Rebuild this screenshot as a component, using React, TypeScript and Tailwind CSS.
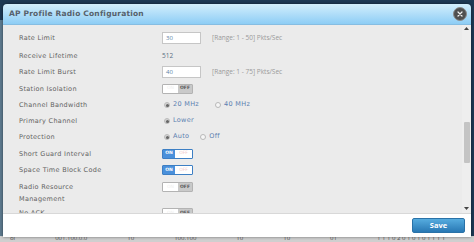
import React from "react";

const font = { fontFamily: '"DejaVu Sans", Verdana, sans-serif' };
const openSans = { fontFamily: '"Open Sans", "Liberation Sans", sans-serif' };

function Toggle({ on }: { on: boolean }) {
  return on ? (
    <div className="flex h-[10px] w-[31px] rounded-[1px] border border-[#3d7fc4] overflow-hidden">
      <div className="w-[12px] bg-[#4a90db] text-white text-[4.5px] font-bold flex items-center justify-center" style={font}>ON</div>
      <div className="flex-1 bg-white text-[#f1c9c9] text-[4.5px] flex items-center justify-center" style={font}>OFF</div>
    </div>
  ) : (
    <div className="flex h-[10px] w-[31px] rounded-[1px] border border-[#b3b3b3] overflow-hidden">
      <div className="w-[15px] bg-white text-[#eee] text-[4.5px] flex items-center justify-center" style={font}>ON</div>
      <div className="flex-1 bg-[#c9c9c9] text-[#555] text-[4.5px] font-bold flex items-center justify-center" style={font}>OFF</div>
    </div>
  );
}

function Radio({ checked, label }: { checked: boolean; label: string }) {
  return (
    <div className="flex items-center">
      <div className={`w-[6px] h-[6px] rounded-full flex items-center justify-center ${checked ? "bg-[#d2d2d2] border border-[#bbb]" : "bg-[#f6f6f6] border border-[#b8b8b8]"}`}>
        {checked && <div className="w-[3px] h-[3px] rounded-full bg-[#666]" />}
      </div>
      <span className="ml-[3px] text-[6.5px] tracking-[0.3px] text-[#5b7fb0]" style={font}>{label}</span>
    </div>
  );
}

function Row({ h, label, children, top }: { h: number; label: React.ReactNode; children?: React.ReactNode; top?: boolean }) {
  return (
    <div className={`flex ${top ? "items-start pt-[3px]" : "items-center"}`} style={{ height: h }}>
      <div className="w-[143px] shrink-0 text-[6.5px] tracking-[0.3px] text-[#626262] leading-[12px]" style={font}>{label}</div>
      <div className="flex items-center">{children}</div>
    </div>
  );
}

function Input({ value, range }: { value: string; range: string }) {
  return (
    <div className="flex items-center">
      <div className="w-[39px] h-[12px] bg-white border border-[#c6c6c6] flex items-center pl-[3px] text-[6px] text-[#5b7fa6]" style={openSans}>{value}</div>
      <span className="ml-[11px] text-[6.5px] text-[#9a9a9a]" style={openSans}>{range}</span>
    </div>
  );
}

export default function App() {
  return (
    <div className="relative w-[474px] h-[242px] overflow-hidden bg-[#1d3954]">
      <div className="absolute left-0 top-[20px] w-[4px] h-[220px] bg-[#5d7a8e]" />
      <div className="absolute inset-x-0 bottom-0 h-[6px] bg-[#cfcfcf] flex items-start gap-[40px] pl-[10px] text-[6px] text-[#555] leading-[5px]" style={openSans}>
        <span>ol</span><span>001.100.0.0</span><span>10</span><span>100.100</span><span>10</span><span>10</span><span>01</span><span>1 1 1 0 2 0 1 0 1 0 1 1 1 1</span>
      </div>
      <div className="absolute left-[3px] top-[4px] w-[468px] h-[233px] flex flex-col rounded-t-[4px] overflow-hidden shadow-[0_0_3px_rgba(0,0,0,0.5)]">
        <div className="h-[21px] shrink-0 flex items-center justify-between pl-[6px] pr-[4px] bg-gradient-to-b from-[#d2eefc] to-[#8dcdf5] border-b border-[#86bde2]">
          <span className="text-[7.5px] font-bold text-[#56616c] tracking-[0.2px]" style={font}>AP Profile Radio Configuration</span>
          <div className="w-[14px] h-[14px] rounded-full bg-[#4f4f4f] border border-[#8a8a8a] flex items-center justify-center">
            <svg width="6" height="6" viewBox="0 0 6 6"><path d="M1 1L5 5M5 1L1 5" stroke="#f2f2f2" strokeWidth="1.2" strokeLinecap="round" /></svg>
          </div>
        </div>
        <div className="flex-1 flex bg-[#ebebeb] overflow-hidden">
          <div className="flex-1 pl-[16px] pt-[4px] overflow-hidden">
            <Row h={18} label="Rate Limit"><Input value="30" range="[Range: 1 - 50] Pkts/Sec" /></Row>
            <Row h={17} label="Receive Lifetime"><span className="text-[6.5px] text-[#5a6e84]" style={openSans}>512</span></Row>
            <Row h={16} label="Rate Limit Burst"><Input value="40" range="[Range: 1 - 75] Pkts/Sec" /></Row>
            <Row h={17} label="Station Isolation"><Toggle on={false} /></Row>
            <Row h={16} label="Channel Bandwidth"><div className="flex pl-[2px] gap-[16px]"><Radio checked label="20 MHz" /><Radio checked={false} label="40 MHz" /></div></Row>
            <Row h={16} label="Primary Channel"><div className="pl-[2px]"><Radio checked label="Lower" /></div></Row>
            <Row h={16} label="Protection"><div className="flex pl-[2px] gap-[11px]"><Radio checked label="Auto" /><Radio checked={false} label="Off" /></div></Row>
            <Row h={17} label="Short Guard Interval"><Toggle on /></Row>
            <Row h={16} label="Space Time Block Code"><Toggle on /></Row>
            <Row h={27} top label={<>Radio Resource<br />Management</>}><div className="pt-[1px]"><Toggle on={false} /></div></Row>
            <Row h={16} label="No ACK"><Toggle on={false} /></Row>
          </div>
          <div className="w-[9px] shrink-0 bg-[#eeeeee] flex flex-col items-center pt-[2px] pb-[3px]">
            <svg width="5" height="3" viewBox="0 0 5 3"><path d="M2.5 0L5 3H0z" fill="#444" /></svg>
            <div className="h-[92px]" />
            <div className="w-[6px] h-[41px] rounded-[1px] bg-[#c4c4c4]" />
            <div className="flex-1" />
            <svg width="5" height="3" viewBox="0 0 5 3"><path d="M0 0H5L2.5 3z" fill="#444" /></svg>
          </div>
        </div>
        <div className="h-[24px] shrink-0 bg-white border-t border-[#d8d8d8] flex items-start justify-end pt-[4px] pr-[6px]">
          <div className="w-[53px] h-[15px] rounded-[2px] bg-gradient-to-b from-[#56acdf] to-[#2878b4] border border-[#2a72a8] flex items-center justify-center text-white text-[7.5px] font-bold" style={openSans}>Save</div>
        </div>
      </div>
    </div>
  );
}
